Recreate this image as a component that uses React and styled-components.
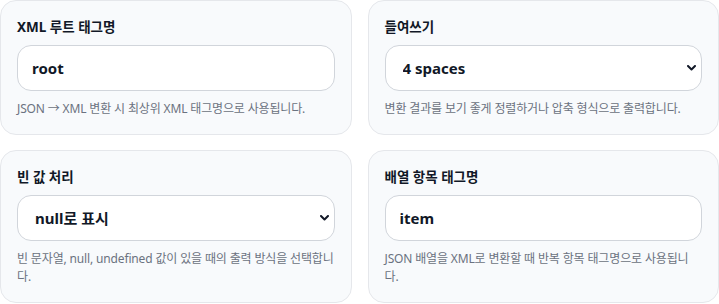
import React, { useState } from 'react'
import styled, { createGlobalStyle } from 'styled-components'

const GlobalStyle = createGlobalStyle`
  html, body {
    margin: 0;
    padding: 0;
    background: #ffffff;
  }
  body {
    font-family: "Noto Sans", "Noto Sans CJK KR", sans-serif;
    -webkit-font-smoothing: antialiased;
  }
  * { box-sizing: border-box; }
`

const Grid = styled.div`
  display: grid;
  grid-template-columns: 1fr 1fr;
  column-gap: 16px;
  row-gap: 15px;
  width: 719px;
`

const Card = styled.div`
  background: #f8fafc;
  border: 1px solid #e5e7eb;
  border-radius: 16px;
  padding: 16px;
  display: flex;
  flex-direction: column;
`

const Label = styled.label`
  font-size: 13.5px;
  font-weight: 700;
  line-height: 20px;
  color: #111827;
  margin-bottom: 8px;
`

const fieldStyle = `
  width: 100%;
  height: 46px;
  border: 1px solid #d1d5db;
  border-radius: 14px;
  background: #ffffff;
  padding: 0 14px;
  font-family: "Noto Sans", "Noto Sans CJK KR", sans-serif;
  font-size: 15px;
  font-weight: 700;
  color: #111827;
  outline: none;
`

const TextInput = styled.input`
  ${fieldStyle}
`

const SelectWrap = styled.div`
  position: relative;
`

const Select = styled.select`
  ${fieldStyle}
  appearance: none;
  -webkit-appearance: none;
  padding-left: 17px;
`

const Chevron = styled.svg`
  position: absolute;
  right: 6px;
  top: 50%;
  width: 9px;
  height: 6px;
  margin-top: -3px;
  pointer-events: none;
`

const Help = styled.p`
  margin: 9px 0 0;
  font-size: 12px;
  line-height: 18px;
  letter-spacing: -0.15px;
  color: #6b7280;
  word-break: normal;
`

const fields = [
  { key: 'root', label: 'XML 루트 태그명', type: 'input', value: 'root',
    help: 'JSON → XML 변환 시 최상위 XML 태그명으로 사용됩니다.' },
  { key: 'indent', label: '들여쓰기', type: 'select', value: '4',
    options: [['2', '2 spaces'], ['4', '4 spaces'], ['tab', 'Tab'], ['none', '압축']],
    help: '변환 결과를 보기 좋게 정렬하거나 압축 형식으로 출력합니다.' },
  { key: 'empty', label: '빈 값 처리', type: 'select', value: 'null',
    options: [['null', 'null로 표시'], ['empty', '빈 태그'], ['omit', '생략']],
    help: '빈 문자열, null, undefined 값이 있을 때의 출력 방식을 선택합니다.' },
  { key: 'item', label: '배열 항목 태그명', type: 'input', value: 'item',
    help: 'JSON 배열을 XML로 변환할 때 반복 항목 태그명으로 사용됩니다.' },
]

function Field({ field }) {
  const [value, setValue] = useState(field.value)
  return (
    <Card>
      <Label htmlFor={field.key}>{field.label}</Label>
      {field.type === 'input' ? (
        <TextInput id={field.key} value={value} onChange={e => setValue(e.target.value)} />
      ) : (
        <SelectWrap>
          <Select id={field.key} value={value} onChange={e => setValue(e.target.value)}>
            {field.options.map(([v, t]) => <option key={v} value={v}>{t}</option>)}
          </Select>
          <Chevron viewBox="0 0 9 6">
            <path d="M1 1l3.5 3.5L8 1" fill="none" stroke="#111827" strokeWidth="2" strokeLinecap="round" strokeLinejoin="round" />
          </Chevron>
        </SelectWrap>
      )}
      <Help>{field.help}</Help>
    </Card>
  )
}

export default function App() {
  return (
    <>
      <GlobalStyle />
      <Grid>
        {fields.map(f => <Field key={f.key} field={f} />)}
      </Grid>
    </>
  )
}
